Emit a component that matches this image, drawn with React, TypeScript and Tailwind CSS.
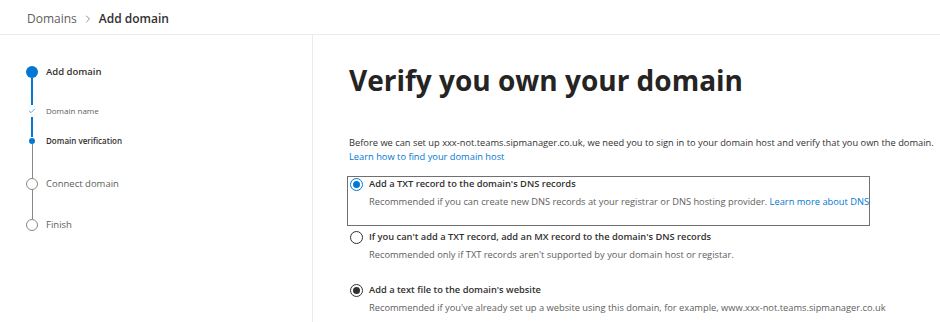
import { Check, ChevronRight } from "lucide-react";

function Radio({ state }: { state: "blue" | "empty" | "dark" }) {
  if (state === "blue") {
    return (
      <span className="flex h-[13px] w-[13px] shrink-0 items-center justify-center rounded-full border border-[#0078d4] bg-white">
        <span className="h-[7px] w-[7px] rounded-full bg-[#0078d4]" />
      </span>
    );
  }
  if (state === "dark") {
    return (
      <span className="flex h-[13px] w-[13px] shrink-0 items-center justify-center rounded-full border border-[#323130] bg-white">
        <span className="h-[7px] w-[7px] rounded-full bg-[#323130]" />
      </span>
    );
  }
  return <span className="h-[13px] w-[13px] shrink-0 rounded-full border border-[#323130] bg-white" />;
}

function Option({
  radio,
  title,
  desc,
  link,
  boxed,
}: {
  radio: "blue" | "empty" | "dark";
  title: string;
  desc: string;
  link?: string;
  boxed?: boolean;
}) {
  return (
    <div
      className={
        boxed
          ? "w-[523px] border border-[#707070] pb-[17px] pt-[1px]"
          : "w-[523px] border border-transparent pt-[1px]"
      }
    >
      <div className="flex h-[12px] items-center gap-[6px] pl-[2px]">
        <Radio state={radio} />
        <span className="whitespace-nowrap text-[9.3px] font-semibold text-[#323130]">{title}</span>
      </div>
      <div className="mt-[6px] whitespace-nowrap pl-[21px] text-[9.3px] leading-[12px] text-[#605e5c]">
        {desc}
        {link && <span className="text-[#0078d4]"> {link}</span>}
      </div>
    </div>
  );
}

export default function App() {
  return (
    <div className="h-[322px] w-[940px] overflow-hidden bg-white font-['Open_Sans',sans-serif] text-[#323130]">
      <header className="flex h-[35px] items-center border-b border-[#edebe9] pl-[27px] pt-[3px] text-[12px]">
        <span className="text-[#605e5c]">Domains</span>
        <ChevronRight size={12} strokeWidth={1.4} className="mx-[5px] text-[#605e5c]" />
        <span className="font-semibold text-[#323130]">Add domain</span>
      </header>

      <div className="flex h-[287px]">
        <aside className="w-[313px] shrink-0 border-r border-[#edebe9] pl-[26px] pt-[31px]">
          {/* Add domain */}
          <div className="flex h-[12px] items-center gap-[8px]">
            <span className="h-[12px] w-[12px] rounded-full bg-[#0078d4]" />
            <span className="text-[9.5px] font-semibold">Add domain</span>
          </div>
          <div className="ml-[5px] h-[27px] w-[2px] bg-[#0078d4]" />
          {/* Domain name */}
          <div className="flex h-[12px] items-center gap-[8px]">
            <span className="flex w-[12px] justify-center">
              <Check size={8} strokeWidth={2} className="text-[#0078d4]" />
            </span>
            <span className="text-[8px] text-[#605e5c]">Domain name</span>
          </div>
          <div className="ml-[5px] h-[20px] w-[2px] bg-[#0078d4]" />
          {/* Domain verification */}
          <div className="flex h-[7px] items-center gap-[8px]">
            <span className="flex w-[12px] justify-center">
              <span className="h-[6px] w-[6px] rounded-full bg-[#0078d4]" />
            </span>
            <span className="text-[8px] font-semibold">Domain verification</span>
          </div>
          <div className="ml-[5.5px] h-[34px] w-[1px] bg-[#8a8886]" />
          {/* Connect domain */}
          <div className="flex h-[12px] items-center gap-[8px]">
            <span className="h-[12px] w-[12px] rounded-full border-[1.5px] border-[#8a8886]" />
            <span className="text-[9.5px] text-[#605e5c]">Connect domain</span>
          </div>
          <div className="ml-[5.5px] h-[29px] w-[1px] bg-[#8a8886]" />
          {/* Finish */}
          <div className="flex h-[12px] items-center gap-[8px]">
            <span className="h-[12px] w-[12px] rounded-full border-[1.5px] border-[#8a8886]" />
            <span className="text-[9.5px] text-[#605e5c]">Finish</span>
          </div>
        </aside>

        <main className="pl-[34px] pt-[27px]">
          <h1 className="pl-[2px] text-[28px] font-bold leading-[36px] text-[#252423]">Verify you own your domain</h1>
          <p className="mt-[38px] whitespace-nowrap pl-[2px] text-[9.3px] leading-[14px] text-[#323130]">
            Before we can set up xxx-not.teams.sipmanager.co.uk, we need you to sign in to your domain host and verify that you own the domain.
            <br />
            <span className="text-[#0078d4]">Learn how to find your domain host</span>
          </p>

          <div className="mt-[12px]">
            <Option
              boxed
              radio="blue"
              title="Add a TXT record to the domain's DNS records"
              desc="Recommended if you can create new DNS records at your registrar or DNS hosting provider."
              link="Learn more about DNS"
            />
          </div>
          <div className="mt-[3px]">
            <Option
              radio="empty"
              title="If you can't add a TXT record, add an MX record to the domain's DNS records"
              desc="Recommended only if TXT records aren't supported by your domain host or registar."
            />
          </div>
          <div className="mt-[20px]">
            <Option
              radio="dark"
              title="Add a text file to the domain's website"
              desc="Recommended if you've already set up a website using this domain, for example, www.xxx-not.teams.sipmanager.co.uk"
            />
          </div>
        </main>
      </div>
    </div>
  );
}
